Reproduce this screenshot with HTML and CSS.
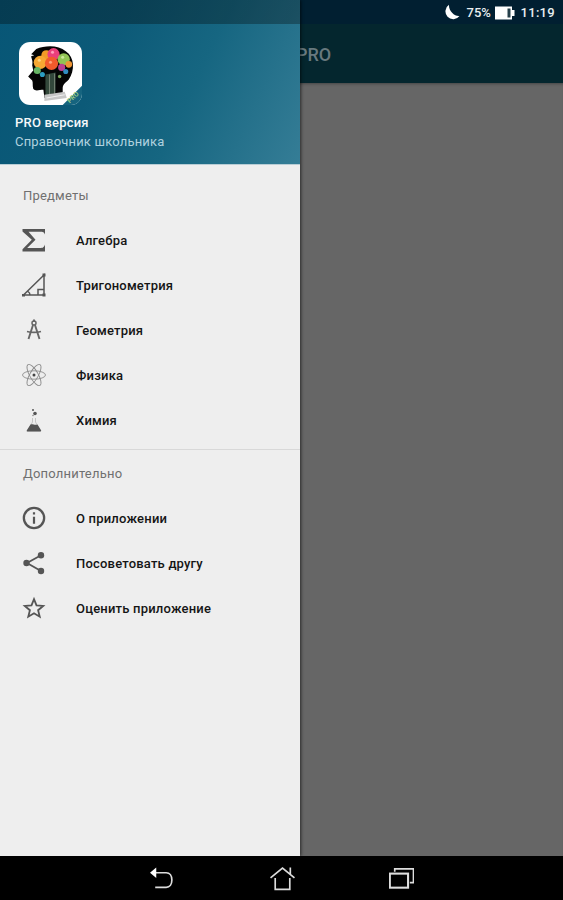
FILE: index.html
```html
<!DOCTYPE html>
<html lang="ru">
<head>
    <meta charset="UTF-8">
    <meta name="viewport" content="width=device-width, initial-scale=1.0">
    <title>Справочник школьника PRO</title>
    <link rel="stylesheet" href="styles.css">
</head>
<body>
    <div class="app">
        <div class="status-bar"></div>
        <header class="toolbar">
            <h1>PRO</h1>
        </header>
        <main class="content"></main>

        <!-- Side menu -->
        <aside class="drawer">
            <div class="drawer-header">
                <svg class="logo" viewBox="0 0 62 62">
                    <defs>
                        <clipPath id="tile"><rect width="62" height="62" rx="11"/></clipPath>
                    </defs>
                    <g clip-path="url(#tile)">
                        <rect width="62" height="62" fill="#fff"/>
                        <path d="M62 43L43 62h19z" fill="#16647f"/>
                        <path d="M12 12l5-5C26 3 39 3 46 9c9 6 9 19 3 28-4 4-6 5-6 9v5l-18 4-1-8c-4 0-8 2-10-1-1-3 0-6-1-8l-4-4 5-6-1-5c1-5-1-7-1-9l3-1z" fill="#050505"/>
                        <path d="M26 32l10-2v20l-10 3z" fill="#33483b"/>
                        <path d="M30 32v20M35 31v20" stroke="#849080" stroke-width=".8"/>
                        <path d="M25 52l20-3 2 6-22 3z" fill="#c6c6c6"/>
                        <path d="M27 55l18-3" stroke="#eee"/>
                        <circle cx="27" cy="13" r="5" fill="#f39b27"/>
                        <circle cx="21" cy="20" r="6.500" fill="#f7a833"/>
                        <circle cx="34" cy="12" r="6" fill="#ea3f7b"/>
                        <circle cx="32" cy="21" r="6.500" fill="#f15a2c"/>
                        <circle cx="44" cy="17" r="6" fill="#91c455"/>
                        <circle cx="42" cy="25" r="3.500" fill="#bd3f91"/>
                        <circle cx="49" cy="22" r="3.300" fill="#ef9534"/>
                        <circle cx="18" cy="28" r="3.500" fill="#67b565"/>
                        <circle cx="23" cy="32" r="2.500" fill="#2c9dc1"/>
                        <circle cx="46" cy="29" r="2.500" fill="#318cc0"/>
                        <circle cx="40" cy="34" r="1.700" fill="#78a758"/>
                        <circle cx="20" cy="18" r="1.500" fill="#ffd27a"/>
                        <circle cx="33" cy="10" r="1.500" fill="#ff9dbd"/>
                        <circle cx="31" cy="20" r="1.500" fill="#ffa07a"/>
                        <circle cx="43" cy="15" r="1.500" fill="#cbe89b"/>
                    </g>
                    <text class="logo-pro" x="50" y="60.500" transform="rotate(-44 50 60.500)">PRO</text>
                </svg>
                <div class="version">PRO версия</div>
                <div class="app-name">Справочник школьника</div>
            </div>

            <nav class="menu">
                <h2>Предметы</h2>
                <a class="item algebra">
                    <svg viewBox="0 0 24 24"><path d="M.5 1h22.500v5.500C22 4 21 3.700 18 3.700H6.500l7 8-8.300 8.300H18c3 0 4-.7 5-3.500V23.500H.5v-2.300l9.300-9.500L.5 3.500z" fill="#555"/></svg>
                    <span>Алгебра</span>
                </a>
                <a class="item trigonometry">
                    <svg viewBox="0 0 24 24" fill="none" stroke="#555" stroke-width="1.500"><path d="M1.500 22L22 2v20zM16 22v-5.500h6M6 18.500c1.500 1 2 2 2 3.500"/><path d="M20.500 .5h3v3h-3zM20.500 20.500h3v3h-3zM0 21h3v2.500H0z" fill="#555" stroke="none"/></svg>
                    <span>Тригонометрия</span>
                </a>
                <a class="item geometry">
                    <svg viewBox="0 0 24 24" fill="none" stroke="#666"><circle cx="12" cy="5" r="2" stroke-width="1.500"/><path d="M12 1.500V4" stroke-width="2"/><path d="M11 7L6.500 21M13 7l4.500 14" stroke-width="1.900"/><path d="M5 13.500c4 1 10 1 14 0" stroke-width="1.500"/></svg>
                    <span>Геометрия</span>
                </a>
                <a class="item physics">
                    <svg viewBox="0 0 24 24" fill="none" stroke="#8c8c8c" stroke-width=".9"><ellipse cx="12" cy="12" rx="11.500" ry="4.200"/><ellipse cx="12" cy="12" rx="12" ry="4.200" transform="rotate(60 12 12)"/><ellipse cx="12" cy="12" rx="12" ry="4.200" transform="rotate(120 12 12)"/><circle cx="12" cy="12" r="1.500" fill="#444" stroke="none"/></svg>
                    <span>Физика</span>
                </a>
                <a class="item chemistry">
                    <svg viewBox="0 0 24 24"><path d="M10.500 10v4L5.500 23h13l-5-9v-4" fill="none" stroke="#bbb" stroke-width=".8"/><path d="M8.500 16.500c2-1 4 1 7 0l3.700 6c0 .7-.5 1-1 1H5.500c-.7 0-1-.5-.8-1z" fill="#555"/><circle cx="13" cy="5.500" r="1.800" fill="#555"/><circle cx="11" cy="2" r="1" fill="#555"/><circle cx="11" cy="7.500" r=".7" fill="#777"/></svg>
                    <span>Химия</span>
                </a>
            </nav>

            <nav class="menu extra">
                <h2>Дополнительно</h2>
                <a class="item about">
                    <svg viewBox="0 0 24 24" fill="#555"><path d="M12 .7a11.300 11.300 0 1 0 0 22.600A11.300 11.300 0 0 0 12 .7zm0 20.300a9 9 0 1 1 0-18 9 9 0 0 1 0 18zM10.900 10.800h2.200v7h-2.200zM10.900 6.300h2.200v2.300h-2.200z"/></svg>
                    <span>О приложении</span>
                </a>
                <a class="item share">
                    <svg viewBox="0 0 24 24"><path d="M19 4.300L5 12l14 8" fill="none" stroke="#555" stroke-width="1.800"/><g fill="#555"><circle cx="19" cy="4.200" r="3.200"/><circle cx="4.500" cy="12" r="3.200"/><circle cx="19" cy="20" r="3.200"/></g></svg>
                    <span>Посоветовать другу</span>
                </a>
                <a class="item rate">
                    <svg viewBox="0 0 24 24" fill="none" stroke="#555" stroke-width="1.800"><path d="M12 3.200l2.500 6.200 6.700.5-5.100 4.300 1.600 6.500-5.700-3.500-5.700 3.500 1.600-6.500-5.100-4.300 6.700-.5z"/></svg>
                    <span>Оценить приложение</span>
                </a>
            </nav>
        </aside>

        <!-- System status, drawn over everything -->
        <div class="status">
            <svg class="moon" viewBox="0 0 17 17"><path d="M6 .8A7.800 7.800 0 1 0 16.500 12C11.500 12.500 5.500 7 6 .8z" fill="#fff"/></svg>
            <span class="percent">75%</span>
            <svg class="battery" viewBox="0 0 20 14"><path d="M0 .5h17v3.500h2.500v6H17v3.500H0z" fill="#fff"/><path d="M12.500 2.500h3v9h-3z" fill="#26404a"/></svg>
            <span class="clock">11:19</span>
        </div>

        <footer class="nav-bar">
            <svg viewBox="0 0 24 24" fill="none" stroke="#ddd" stroke-width="1.600"><path d="M5 6.500h10.500c3.500 0 5.500 3 5.500 7s-2 7-5.500 7H5"/><path d="M0 6.500L6 1.500v10z" fill="#fff" stroke="none"/></svg>
            <svg viewBox="0 0 24 24" fill="none" stroke="#ddd" stroke-width="1.600"><path d="M.5 11.500L12 2l11.500 9.500M19.500 1.500v7M5 11.500v11h14v-11"/></svg>
            <svg viewBox="0 0 24 24" fill="none" stroke="#ddd" stroke-width="1.600"><path d="M5.500 5.500V2.800h18V16H20"/><rect x=".8" y="7.300" width="17.500" height="13.500" stroke-width="2"/></svg>
        </footer>
    </div>
</body>
</html>
```
FILE: styles.css
```css
* {
    box-sizing: border-box;
}
body {
    margin: 0;
    font-family: Roboto, "Noto Sans", sans-serif;
    background: #000;
    overflow: hidden;
}
.app {
    position: relative;
    display: flex;
    flex-direction: column;
    height: 900px;
}
.status-bar {
    height: 24px;
    background: #011f31;
}
.toolbar {
    display: flex;
    align-items: center;
    height: 59px;
    padding: 2px 0 0 296px;
    background: #04262e;
}
.toolbar h1 {
    margin: 0;
    font-size: 18px;
    font-weight: 500;
    line-height: 24px;
    color: #68797e;
}
.content {
    flex: 1;
    background: #666;
    box-shadow: inset 0 3px 3px -2px #444;
}
.drawer {
    position: absolute;
    top: 0;
    left: 0;
    width: 300px;
    height: 856px;
    background: #eee;
    box-shadow: 1px 0 3px rgba(0, 0, 0, 0.6);
}
.drawer-header {
    height: 165px;
    padding: 42px 15px 0;
    background:
        linear-gradient(rgba(0, 0, 0, 0.3) 24px, transparent 24px),
        linear-gradient(115deg, #075676 0%, #0c5a78 35%, #166681 62%, #357d96 100%);
    border-bottom: 1px solid #b8cdd5;
}
.logo {
    display: block;
    width: 63px;
    height: 63px;
    margin-left: 4px;
}
.logo-pro {
    font-size: 6.5px;
    font-weight: 700;
    fill: #9ccc83;
}
.version {
    margin-top: 9px;
    font-size: 13px;
    font-weight: 500;
    line-height: 17px;
    letter-spacing: 0.2px;
    color: #f4f8fa;
}
.app-name {
    margin-top: 2px;
    font-size: 13px;
    line-height: 17px;
    letter-spacing: 0.18px;
    color: #b0d2df;
}
.menu {
    height: 284px;
    padding: 8px 0 0 23px;
}
.menu h2 {
    margin: 0;
    height: 45px;
    font-size: 13px;
    font-weight: 400;
    line-height: 45px;
    letter-spacing: 0.2px;
    color: #707070;
}
.extra {
    border-top: 1px solid #d8d8d8;
    padding-top: 1px;
}
.item {
    display: flex;
    align-items: center;
    gap: 30px;
    height: 45px;
    font-size: 13px;
    font-weight: 500;
    letter-spacing: 0.2px;
    color: #151515;
}
.item svg {
    width: 24px;
    height: 24px;
    margin: 0 0 1px -1px;
}
.status {
    position: absolute;
    top: 0;
    right: 8px;
    display: flex;
    align-items: center;
    height: 25px;
    font-size: 13px;
    font-weight: 500;
    color: #e8eef0;
}
.moon {
    width: 17px;
    height: 17px;
    margin-right: 7px;
}
.percent {
    width: 26px;
}
.battery {
    width: 20px;
    height: 14px;
    margin: 0 6px 0 2px;
}
.clock {
    letter-spacing: 0.3px;
}
.nav-bar {
    display: flex;
    justify-content: center;
    align-items: center;
    gap: 94.5px;
    height: 44px;
    padding-left: 1px;
    background: #000;
}
.nav-bar svg {
    width: 25px;
    height: 25px;
}
```
